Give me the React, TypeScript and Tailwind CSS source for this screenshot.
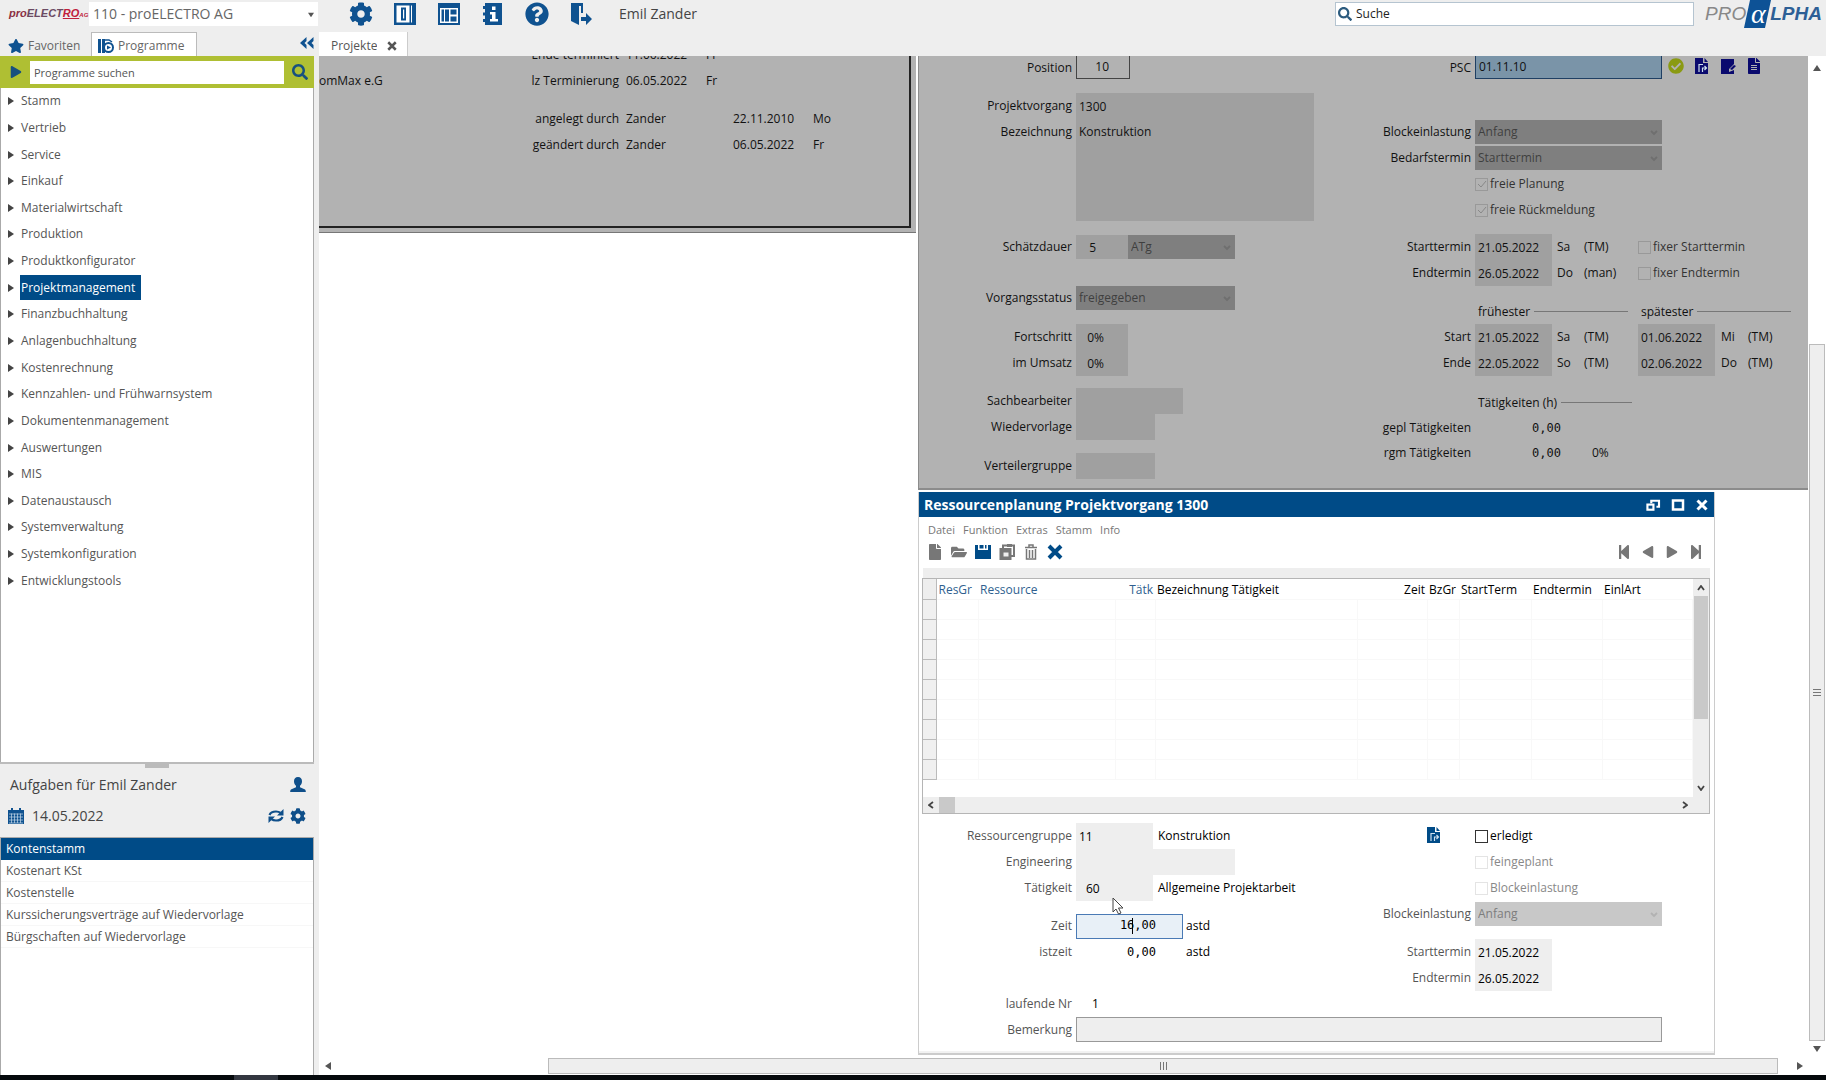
import type { ReactNode } from "react";
import clsx from "clsx";
import {
  FaCheckCircle,
  FaCog,
  FaFile,
  FaFileAlt,
  FaFolderOpen,
  FaPlay,
  FaQuestionCircle,
  FaSearch,
  FaStar,
  FaStepBackward,
  FaStepForward,
} from "react-icons/fa";

const programme = [
  "Stamm",
  "Vertrieb",
  "Service",
  "Einkauf",
  "Materialwirtschaft",
  "Produktion",
  "Produktkonfigurator",
  "Projektmanagement",
  "Finanzbuchhaltung",
  "Anlagenbuchhaltung",
  "Kostenrechnung",
  "Kennzahlen- und Frühwarnsystem",
  "Dokumentenmanagement",
  "Auswertungen",
  "MIS",
  "Datenaustausch",
  "Systemverwaltung",
  "Systemkonfiguration",
  "Entwicklungstools",
];

const aufgaben = [
  "Kontenstamm",
  "Kostenart KSt",
  "Kostenstelle",
  "Kurssicherungsverträge auf Wiedervorlage",
  "Bürgschaften auf Wiedervorlage",
];

const spalten = [
  { name: "ResGr", cell: "w-[42px]", head: "text-[#2f5f8f]" },
  { name: "Ressource", cell: "w-[137px]", head: "text-[#2f5f8f]" },
  { name: "Tätk", cell: "w-[40px]", head: "text-right text-[#2f5f8f]" },
  { name: "Bezeichnung Tätigkeit", cell: "w-[202px]", head: "text-black" },
  { name: "Zeit", cell: "w-[70px]", head: "text-right text-black" },
  { name: "BzGr", cell: "w-[32px]", head: "text-black" },
  { name: "StartTerm", cell: "w-[72px]", head: "text-black" },
  { name: "Endtermin", cell: "w-[71px]", head: "text-black" },
  { name: "EinlArt", cell: "", head: "text-black" },
];

/* ---------- icons ---------- */

function ColumnsIcon() {
  return (
    <svg viewBox="0 0 24 24" className="size-6">
      <path d="M1 1h22v22H1z" fill="currentColor" />
      <path d="M3.500 3.500h13v17h-13zM18 3.500h1v17h-1z" fill="#fff" />
      <path d="M8 5.500h5v13H8z" fill="currentColor" />
      <path d="M10 7.500h1.200v9H10z" fill="#fff" />
    </svg>
  );
}

function LayoutIcon() {
  return (
    <svg viewBox="0 0 24 24" className="size-6">
      <path d="M1 1h22v22H1z" fill="currentColor" />
      <path d="M3 6h18v15H3z" fill="#fff" />
      <path d="M4.500 7.500h2.500v12H4.500zM8 7.500h4v12H8zM13.500 7.500h6v5h-6zM13.500 14.500h6v5h-6z" fill="currentColor" />
    </svg>
  );
}

function InfoBookIcon() {
  return (
    <svg viewBox="0 0 24 24" className="size-6">
      <path d="M4 1h17v22H4v-3H2v-3h2v-3.500H2v-3h2V7H2V4h2z" fill="currentColor" />
      <path d="M11 4.500h3.500v3.500H11zM9 10h5.500v7H17v2.500H9V17h2v-4.500H9z" fill="#fff" />
    </svg>
  );
}

function ExitIcon() {
  return (
    <svg viewBox="0 0 24 24" className="size-6">
      <path d="M2 1h12v10h-2V4h-2v19l-8-4z" fill="currentColor" />
      <path d="M12 15v4h5v4l6-6-6-6v4z" fill="currentColor" />
    </svg>
  );
}

function ProgramsIcon() {
  return (
    <svg viewBox="0 0 16 16" className="size-4">
      <path d="M0 1h3v14H0zM4 1h3v14H4z" fill="currentColor" />
      <circle cx="10.500" cy="9.500" r="4.500" fill="#fff" stroke="currentColor" strokeWidth="2" />
      <path d="M9 7.500l4 2-4 2z" fill="currentColor" />
      <path d="M7 2h4l3 2" fill="none" stroke="currentColor" strokeWidth="1.500" />
    </svg>
  );
}

function CollapseIcon() {
  return (
    <svg viewBox="0 0 14 12" className="h-3 w-3.5">
      <path d="M6.500 0v4L4.500 6l2 2v4L0 6zM13.500 0v4l-2 2 2 2v4L7 6z" fill="currentColor" />
    </svg>
  );
}

function CalendarIcon() {
  return (
    <svg viewBox="0 0 16 16" className="size-4">
      <path d="M0 2h3V0h2v2h6V0h2v2h3v14H0z" fill="currentColor" />
      <path
        d="M1 6h14M1 9h14M1 12h14M1 15h14M3.500 5.500V15M6.500 5.500V15M9.500 5.500V15M12.500 5.500V15"
        stroke="#c5d8ea"
        strokeWidth=".7"
      />
    </svg>
  );
}

function PersonIcon() {
  return (
    <svg viewBox="0 0 16 16" className="size-4" fill="currentColor">
      <path d="M8 0c2.600 0 4 1.800 4 4.300 0 2-.9 3.700-2 4.500v1.400l4.500 2c.9.400 1.300 1.200 1.300 2.300V15H.2v-.5c0-1.100.4-1.900 1.300-2.300l4.500-2V8.800C4.900 8 4 6.300 4 4.300 4 1.800 5.400 0 8 0z" />
    </svg>
  );
}

function RefreshIcon() {
  return (
    <svg viewBox="0 0 16 16" className="size-4" fill="none" stroke="currentColor" strokeWidth="2.200">
      <path d="M1.500 7C2.500 4.500 5 3.500 8 3.500c2 0 3.500.5 4.500 1.300M14.500 9c-1 2.500-3.500 3.500-6.500 3.500-2 0-3.500-.5-4.500-1.300" />
      <path d="M15.500 1v6.500H9zM.5 15V8.500H7z" fill="currentColor" stroke="none" />
    </svg>
  );
}

function SaveIcon() {
  return (
    <svg viewBox="0 0 16 16" className="size-4">
      <path d="M0 1h3v5h10V1h3v14H0z" fill="currentColor" />
      <path d="M4.500 1h4v3.500h-4zM10 1h1.500v3.500H10z" fill="currentColor" />
    </svg>
  );
}

function CopyIcon() {
  return (
    <svg viewBox="0 0 16 16" className="size-4" fill="none" stroke="currentColor" strokeWidth="2">
      <path d="M4 4V1.500h11V12h-3" />
      <path d="M8 1.500h5" strokeWidth="3" />
      <rect x="1.500" y="5" width="10" height="10" fill="currentColor" />
      <path d="M4.500 8.500h5v4h-5z" fill="#eee" stroke="none" />
    </svg>
  );
}

function TrashIcon() {
  return (
    <svg viewBox="0 0 16 16" className="size-4" fill="none" stroke="currentColor" strokeWidth="1.500">
      <path d="M2 3.500h12M6 3V1h4v2M3.500 5v10h9V5M6.500 6v8M9.500 6v8" />
    </svg>
  );
}

function DocJumpIcon() {
  return (
    <svg viewBox="0 0 16 16" className="size-4">
      <path d="M1 0h8v5h5v11H1zM10.500 0L14 4h-3.500z" fill="currentColor" />
      <path d="M5 14V6.500h4M8.500 14V10H12M10.500 8l2 2-2 2" fill="none" stroke="#cfe0ee" strokeWidth="1.200" />
    </svg>
  );
}

function DocEditIcon() {
  return (
    <svg viewBox="0 0 16 16" className="size-4">
      <path d="M1 1h13v5l-5 5v3l5-2v4H1z" fill="currentColor" />
      <path d="M10 11l4-4 2 1-4 4z" fill="currentColor" />
    </svg>
  );
}

function CrossIcon({ className }: { className: string }) {
  return (
    <svg viewBox="0 0 16 16" className={className} fill="none" stroke="currentColor" strokeWidth="4">
      <path d="M2 2l12 12M14 2L2 14" />
    </svg>
  );
}

function RestoreIcon() {
  return (
    <svg viewBox="0 0 16 14" className="h-3 w-4" fill="none" stroke="currentColor" strokeWidth="2.500">
      <path d="M6 5V2h9v7h-3" />
      <rect x="1.500" y="6.500" width="7" height="6" />
    </svg>
  );
}

function MaximizeIcon() {
  return (
    <svg viewBox="0 0 14 12" className="h-3 w-3.5" fill="none" stroke="currentColor" strokeWidth="2.500">
      <rect x="2" y="1.500" width="10" height="9" />
    </svg>
  );
}

function Chevron({ className, d = "M1 5l3-4 3 4" }: { className?: string; d?: string }) {
  return (
    <svg viewBox="0 0 8 6" className={clsx("h-1.5 w-2", className)} fill="none" stroke="currentColor" strokeWidth="1.800">
      <path d={d} />
    </svg>
  );
}

function Triangle({ className = "h-2 w-1.5" }: { className?: string }) {
  return (
    <svg viewBox="0 0 6 8" className={className}>
      <path d="M0 0l6 4-6 4z" fill="currentColor" />
    </svg>
  );
}

/* ---------- form parts ---------- */

function Row({
  id,
  label,
  className,
  labelClass = "w-[153px]",
  children,
}: {
  id?: string;
  label?: string;
  className?: string;
  labelClass?: string;
  children?: ReactNode;
}) {
  return (
    <div className={clsx("flex h-[26px] items-center", className)}>
      <label htmlFor={id} className={clsx("mr-1 shrink-0 text-right whitespace-nowrap", labelClass)}>
        {label}
      </label>
      {children}
    </div>
  );
}

function Field({ id, value = "", label, className }: { id: string; value?: string; label?: string; className?: string }) {
  return (
    <input
      id={id}
      aria-label={label}
      defaultValue={value}
      readOnly
      className={clsx("h-[26px] px-[3px] outline-none", className)}
    />
  );
}

function Choice({ id, value, className, dark }: { id: string; value: string; className: string; dark?: boolean }) {
  return (
    <span className={clsx("relative", className)}>
      <select
        id={id}
        disabled
        className={clsx(
          "block h-6 w-full appearance-none px-[3px] opacity-100",
          dark ? "bg-[#7f7f7f] text-[#3f3f3f]" : "bg-[#c8c8c8] text-[#7d7d7d]"
        )}
      >
        <option>{value}</option>
      </select>
      <Chevron
        d="M1 1l3 3 3-3"
        className={clsx("pointer-events-none absolute top-2.5 right-1", dark ? "text-[#6f6f6f]" : "text-[#b2b2b2]")}
      />
    </span>
  );
}

function Check({ label, box, checked, disabled, className }: { label: string; box: string; checked?: boolean; disabled?: boolean; className?: string }) {
  return (
    <label className={clsx("relative flex items-center gap-0.5 whitespace-nowrap", className)}>
      <input type="checkbox" defaultChecked={checked} disabled={disabled} className={clsx("size-[13px] appearance-none border", box)} />
      {checked && (
        <svg viewBox="0 0 12 12" className="absolute left-px size-3 text-[#888]" fill="none" stroke="currentColor">
          <path d="M2 6l3 3 5-6" />
        </svg>
      )}
      {label}
    </label>
  );
}

function GroupTitle({ text, className }: { text: string; className: string }) {
  return (
    <div className={clsx("flex items-center gap-1 pl-[3px] whitespace-nowrap", className)}>
      {text}
      <span className="h-px flex-1 bg-[#777]" />
    </div>
  );
}

const grau = "bg-[#a0a0a0]";
const hell = "bg-[#eee]";
const mono = "[font-family:'DejaVu_Sans_Mono',monospace]";

/* ---------- page parts ---------- */

function Header() {
  return (
    <header className="flex h-8 shrink-0 items-center pb-1 text-[#0f5290]">
      <div className="w-[89px] pl-[9px] text-[11px] font-bold whitespace-nowrap italic [font-family:'Liberation_Sans',sans-serif]">
        <span className="text-[#8c2f42]">pro</span>
        <span className="text-[#6b4a63]">ELECT</span>
        <span className="text-[#c0203a] underline">RO</span>
        <span className="text-[6px] text-[#c0203a]">AG</span>
      </div>
      <div className="relative w-[229px]">
        <select aria-label="Mandant" className="block h-6 w-full appearance-none bg-white px-1 text-[14px] text-[#666]">
          <option>110 - proELECTRO AG</option>
        </select>
        <Triangle className="pointer-events-none absolute top-2.5 right-1 size-1.5 rotate-90 text-[#555]" />
      </div>
      <nav className="ml-[31px] flex items-center gap-5">
        <button aria-label="Einstellungen"><FaCog className="size-6" /></button>
        <button aria-label="Spalten"><ColumnsIcon /></button>
        <button aria-label="Layout"><LayoutIcon /></button>
        <button aria-label="Info"><InfoBookIcon /></button>
        <button aria-label="Hilfe"><FaQuestionCircle className="size-6" /></button>
        <button aria-label="Abmelden"><ExitIcon /></button>
      </nav>
      <span className="ml-[26px] text-[14px] text-[#444]">Emil Zander</span>
      <div className="ml-auto flex h-6 w-[359px] items-center gap-1 border border-[#b5c4d0] bg-white px-0.5">
        <FaSearch className="size-3.5 text-[#2c5b7e]" />
        <input aria-label="Suche" placeholder="Suche" className="min-w-0 flex-1 text-[12px] outline-none placeholder:text-[#222]" />
      </div>
      <div className="flex w-[132px] items-center justify-end pr-1 text-[19px] italic [font-family:'Liberation_Sans',sans-serif]">
        <span className="text-[#888]">PRO</span>
        <span className="relative flex h-7 w-6 items-center justify-center text-white">
          <svg viewBox="0 0 28 28" className="absolute -left-0.5 h-7 w-7" preserveAspectRatio="none">
            <path d="M6 0h21l-6 28H0z" fill="#0d5296" />
          </svg>
          <span className="relative text-[28px] [font-family:'Liberation_Serif',serif]">α</span>
        </span>
        <span className="font-bold text-[#2d5f96]">LPHA</span>
      </div>
    </header>
  );
}

function Sidebar() {
  return (
    <aside className="flex w-[314px] shrink-0 flex-col">
      <div className="flex h-6 shrink-0 items-center text-[12px] text-[#666]">
        <button className="flex w-[91px] items-center gap-1 pt-1 pl-2">
          <FaStar className="size-4 text-[#0f5290]" />
          Favoriten
        </button>
        <button className="flex h-full w-[106px] items-center gap-1 border border-b-0 border-[#bbb] bg-white pt-0.5 pl-1.5">
          <span className="text-[#0f5290]"><ProgramsIcon /></span>
          Programme
        </button>
        <button aria-label="Einklappen" className="ml-auto pb-0.5 text-[#0f5290]">
          <CollapseIcon />
        </button>
      </div>
      <div className="flex h-8 shrink-0 items-center gap-2 bg-[#afbf33] pr-1.5 pl-2.5 text-[#17507f]">
        <button aria-label="Starten"><FaPlay className="size-3" /></button>
        <input
          aria-label="Programme suchen"
          placeholder="Programme suchen"
          className="h-[23px] min-w-0 flex-1 bg-white px-1 text-[11px] outline-none placeholder:text-[#555]"
        />
        <button aria-label="Suchen"><FaSearch className="size-4" /></button>
      </div>
      <div className="min-h-0 flex-1 border-x border-[#aaa] bg-white">
        <ul className="grid h-[506px] auto-rows-fr">
          {programme.map((name) => (
            <li key={name} className="flex items-center gap-1.5 pl-[7px] text-[#444]">
              <Triangle />
              <button
                className={clsx(
                  "flex h-[25px] items-center pr-1.5 pl-px whitespace-nowrap",
                  name === "Projektmanagement" ? "bg-[#004b87] text-white" : "text-[#555]"
                )}
              >
                {name}
              </button>
            </li>
          ))}
        </ul>
      </div>
      <div className="flex h-[75px] shrink-0 flex-col border-t-2 border-[#bbb] text-[14px] text-[#444]">
        <span className="h-1 w-6 self-center bg-[#bbb]" />
        <div className="flex h-8 items-center justify-between pt-0.5 pr-2 pl-2.5">
          Aufgaben für Emil Zander
          <button aria-label="Benutzer" className="text-[#0f4f8a]"><PersonIcon /></button>
        </div>
        <div className="flex h-8 items-center pr-2 pl-2">
          <span className="text-[#0f5290]"><CalendarIcon /></span>
          <span className="ml-2">14.05.2022</span>
          <button aria-label="Aktualisieren" className="ml-auto text-[#0f4f8a]"><RefreshIcon /></button>
          <button aria-label="Aufgaben einstellen" className="ml-1.5 text-[#0f4f8a]"><FaCog className="size-4" /></button>
        </div>
      </div>
      <ul className="h-[238px] shrink-0 border border-b-0 border-[#aaa] bg-white">
        {aufgaben.map((name, i) => (
          <li key={name}>
            <button
              className={clsx(
                "flex h-[22px] w-full items-center border-b pl-[5px] whitespace-nowrap",
                i === 0 ? "border-[#004b87] bg-[#004b87] text-white" : "border-[#f7f7f7] text-[#555]"
              )}
            >
              {name}
            </button>
          </li>
        ))}
      </ul>
    </aside>
  );
}

function StammPanel() {
  const zeile = "grid h-[26px] grid-cols-[300px_7px_80px_27px_80px_1fr] items-center whitespace-nowrap";
  return (
    <section className="flex h-[177px] w-[597px] shrink-0 overflow-hidden border-b border-[#777] bg-[#b2b2b2] pr-[5px]">
      <div className="h-[172px] flex-1 border-r-2 border-b-2 border-[#222]">
        <div className="-mt-[14px]">
          <div className={zeile}>
            <span className="text-right">Ende terminiert</span>
            <span />
            <span>11.06.2022</span>
            <span>Fr</span>
          </div>
          <div className={zeile}>
            <span className="flex justify-between">
              <span>omMax e.G</span>
              <span>lz Terminierung</span>
            </span>
            <span />
            <span>06.05.2022</span>
            <span>Fr</span>
          </div>
          <div className={clsx(zeile, "mt-3")}>
            <span className="text-right">angelegt durch</span>
            <span />
            <span>Zander</span>
            <span />
            <span>22.11.2010</span>
            <span>Mo</span>
          </div>
          <div className={zeile}>
            <span className="text-right">geändert durch</span>
            <span />
            <span>Zander</span>
            <span />
            <span>06.05.2022</span>
            <span>Fr</span>
          </div>
        </div>
      </div>
    </section>
  );
}

function Termin({ id, label, tag, art, children }: { id: string; label: string; tag: string[]; art: string; children?: ReactNode }) {
  return (
    <Row id={id} label={label} labelClass="w-[157px]">
      <Field id={id} value={tag[0]} className={clsx("w-[77px]", grau)} />
      <span className="ml-[5px] w-[27px]">{tag[1]}</span>
      <span className="w-[54px]">{art}</span>
      {children}
    </Row>
  );
}

function VorgangPanel() {
  const box = "border-[#999] bg-[#b2b2b2]";
  return (
    <section className="flex h-[434px] shrink-0 border-b-2 border-l border-[#8c8c8c] bg-[#b2b2b2]">
      <div className="w-[395px] shrink-0">
        <Row id="position" label="Position" className="h-6!">
          <Field id="position" value="10" className="mb-0.5 h-6! w-[54px] border border-t-0 border-[#444] pr-5! text-right" />
        </Row>
        <Row id="vorgang" label="Projektvorgang" className="mt-[13px]">
          <Field id="vorgang" value="1300" className={clsx("w-[238px]", grau)} />
        </Row>
        <div className="flex">
          <label htmlFor="bezeichnung" className="mr-1 w-[153px] pt-[5px] text-right">Bezeichnung</label>
          <textarea
            id="bezeichnung"
            readOnly
            defaultValue="Konstruktion"
            className={clsx("h-[102px] w-[238px] resize-none px-[3px] pt-[5px] outline-none", grau)}
          />
        </div>
        <Row id="dauer" label="Schätzdauer" className="mt-[13px]">
          <Field id="dauer" value="5" className={clsx("h-6! w-[52px] pr-8! text-right", grau)} />
          <Choice id="einheit" value="ATg" dark className="w-[107px]" />
        </Row>
        <Row id="status" label="Vorgangsstatus" className="mt-[25px]">
          <Choice id="status" value="freigegeben" dark className="w-[159px]" />
        </Row>
        <Row id="fortschritt" label="Fortschritt" className="mt-[13px]">
          <Field id="fortschritt" value="0%" className={clsx("w-[52px] pr-6! text-right", grau)} />
        </Row>
        <Row id="umsatz" label="im Umsatz">
          <Field id="umsatz" value="0%" className={clsx("w-[52px] pr-6! text-right", grau)} />
        </Row>
        <Row id="bearbeiter" label="Sachbearbeiter" className="mt-3">
          <Field id="bearbeiter" className={clsx("w-[107px]", grau)} />
        </Row>
        <Row id="wiedervorlage" label="Wiedervorlage">
          <Field id="wiedervorlage" className={clsx("w-[79px]", grau)} />
        </Row>
        <Row id="verteiler" label="Verteilergruppe" className="mt-[13px]">
          <Field id="verteiler" className={clsx("w-[79px]", grau)} />
        </Row>
      </div>

      <div>
        <Row id="psc" label="PSC" labelClass="w-[157px]" className="h-6!">
          <Field id="psc" value="01.11.10" className="mb-0.5 h-6! w-[187px] border border-t-0 border-[#1f3f63] bg-[#7a94a8]" />
          <div className="ml-1.5 flex items-center gap-[10px] pb-1 text-[#0a0a6e]">
            <FaCheckCircle className="size-4 text-[#8a9a12]" />
            <DocJumpIcon />
            <DocEditIcon />
            <FaFileAlt className="size-4" />
          </div>
        </Row>
        <Row id="block" label="Blockeinlastung" labelClass="w-[157px]" className="mt-[39px]">
          <Choice id="block" value="Anfang" dark className="w-[187px]" />
        </Row>
        <Row id="bedarf" label="Bedarfstermin" labelClass="w-[157px]">
          <Choice id="bedarf" value="Starttermin" dark className="w-[187px]" />
        </Row>
        <Row labelClass="w-[157px]">
          <Check label="freie Planung" checked disabled box={box} className="text-[#333]" />
        </Row>
        <Row labelClass="w-[157px]">
          <Check label="freie Rückmeldung" checked disabled box={box} className="text-[#333]" />
        </Row>
        <div className="h-[11px]" />
        <Termin id="start" label="Starttermin" tag={["21.05.2022", "Sa"]} art="(TM)">
          <Check label="fixer Starttermin" disabled box={box} className="text-[#333]" />
        </Termin>
        <Termin id="end" label="Endtermin" tag={["26.05.2022", "Do"]} art="(man)">
          <Check label="fixer Endtermin" disabled box={box} className="text-[#333]" />
        </Termin>
        <div className="mt-[13px] flex h-[25px] items-center pl-[161px]">
          <GroupTitle text="frühester" className="mr-[10px] w-[153px]" />
          <GroupTitle text="spätester" className="w-[153px]" />
        </div>
        <Termin id="fstart" label="Start" tag={["21.05.2022", "Sa"]} art="(TM)">
          <Field id="sstart" label="Start spätester" value="01.06.2022" className={clsx("w-[77px]", grau)} />
          <span className="ml-1.5 w-[27px]">Mi</span>
          (TM)
        </Termin>
        <Termin id="fende" label="Ende" tag={["22.05.2022", "So"]} art="(TM)">
          <Field id="sende" label="Ende spätester" value="02.06.2022" className={clsx("w-[77px]", grau)} />
          <span className="ml-1.5 w-[27px]">Do</span>
          (TM)
        </Termin>
        <div className="mt-[14px] flex h-[25px] items-center pl-[161px]">
          <GroupTitle text="Tätigkeiten (h)" className="w-[157px]" />
        </div>
        <Row id="gepl" label="gepl Tätigkeiten" labelClass="w-[157px]" className="h-[25px]!">
          <output id="gepl" className={clsx("w-[86px] text-right", mono)}>0,00</output>
        </Row>
        <Row id="rgm" label="rgm Tätigkeiten" labelClass="w-[157px]" className="h-[25px]!">
          <output id="rgm" className={clsx("w-[86px] text-right", mono)}>0,00</output>
          <span className="ml-[31px]">0%</span>
        </Row>
      </div>
    </section>
  );
}

function RessourcenTabelle() {
  return (
    <div className="mr-1 ml-[3px] border border-[#b5b5b5]">
      <div className="flex h-[218px]">
        <table className="h-[200px] min-w-0 flex-1 table-fixed border-collapse text-left">
          <thead>
            <tr className="h-5">
              <th aria-label="Zeile" className="w-[13px] border-r border-b border-[#bbb] bg-[#eee]" />
              {spalten.map((s) => (
                <th key={s.name} className={clsx("px-0.5 pt-0.5 font-normal whitespace-nowrap", s.cell, s.head)}>
                  {s.name}
                </th>
              ))}
            </tr>
          </thead>
          <tbody>
            {Array.from({ length: 9 }, (_, i) => (
              <tr key={i} className="h-5">
                <td className="border-r border-b border-[#bbb] bg-[#f0f0f0]" />
                {spalten.map((s) => (
                  <td key={s.name} className="border border-[#f8f8f8]" />
                ))}
              </tr>
            ))}
          </tbody>
        </table>
        <div className="flex w-4 flex-col items-center bg-[#eee] text-[#444]">
          <span className="flex h-[17px] items-center"><Chevron /></span>
          <span className="h-[123px] w-[14px] bg-[#c9c9c9]" />
          <Chevron d="M1 1l3 4 3-4" className="mt-auto mb-1.5" />
        </div>
      </div>
      <div className="flex h-4 items-center bg-[#eee] pr-5 pl-1 text-[#444]">
        <Chevron className="-rotate-90" />
        <span className="ml-1 h-full w-4 bg-[#c9c9c9]" />
        <Chevron className="ml-auto rotate-90" />
      </div>
    </div>
  );
}

function RessourcenFenster() {
  const blass = "border-[#e4e4e4] bg-white";
  return (
    <section className="mt-0.5 flex w-[797px] flex-col border-x border-b-2 border-[#ccc] bg-white text-[#555]">
      <div className="flex h-[25px] items-center bg-[#004b87] px-[5px] text-white">
        <h2 className="flex-1 text-[14px] font-bold">Ressourcenplanung Projektvorgang 1300</h2>
        <div className="flex items-center gap-2.5">
          <button aria-label="Wiederherstellen"><RestoreIcon /></button>
          <button aria-label="Maximieren"><MaximizeIcon /></button>
          <button aria-label="Schließen"><CrossIcon className="size-3.5 p-px" /></button>
        </div>
      </div>
      <div className="flex h-[25px] items-center gap-2 pl-[9px] text-[11px] text-[#777]">
        <button>Datei</button>
        <button>Funktion</button>
        <button>Extras</button>
        <button>Stamm</button>
        <button>Info</button>
      </div>
      <div className="flex h-[26px] items-start gap-2 pt-0.5 pr-2.5 pl-2 text-[#777]">
        <button aria-label="Neu"><FaFile className="size-4" /></button>
        <button aria-label="Öffnen"><FaFolderOpen className="size-4" /></button>
        <button aria-label="Speichern" className="text-[#004b87]"><SaveIcon /></button>
        <button aria-label="Kopieren"><CopyIcon /></button>
        <button aria-label="Löschen"><TrashIcon /></button>
        <button aria-label="Abbrechen" className="text-[#004b87]"><CrossIcon className="size-4" /></button>
        <span className="flex-1" />
        <button aria-label="Erster"><FaStepBackward className="size-4" /></button>
        <button aria-label="Voriger"><FaPlay className="size-4 rotate-180 p-0.5" /></button>
        <button aria-label="Nächster"><FaPlay className="size-4 p-0.5" /></button>
        <button aria-label="Letzter"><FaStepForward className="size-4" /></button>
      </div>
      <div className="mx-1 h-2.5 bg-[#eee]" />
      <RessourcenTabelle />

      <div className="mt-[9px] flex">
        <div className="w-[395px] shrink-0">
          <Row id="gruppe" label="Ressourcengruppe">
            <Field id="gruppe" value="11" className={clsx("w-[77px] text-black", hell)} />
            <span className="ml-[5px] text-black">Konstruktion</span>
          </Row>
          <Row id="engineering" label="Engineering">
            <Field id="engineering" className={clsx("w-[159px]", hell)} />
          </Row>
          <Row id="taetigkeit" label="Tätigkeit">
            <Field id="taetigkeit" value="60" className={clsx("w-[77px] pl-2.5! text-black", hell)} />
            <span className="ml-[5px] whitespace-nowrap text-black">Allgemeine Projektarbeit</span>
          </Row>
          <Row id="zeit" label="Zeit" className="relative mt-[12px]">
            <input
              id="zeit"
              defaultValue="16,00"
              className={clsx(
                "h-[25px] w-[107px] border border-[#4a7ab5] bg-[#e8f0f7] pr-[26px] pb-0.5 text-right text-black outline-none",
                mono
              )}
            />
            <span className="absolute left-[213px] h-4 w-px bg-black" />
            <svg viewBox="0 0 12 18" className="absolute -top-4 left-[193px] h-[18px] w-3">
              <path d="M1 1v14l3-3 2.500 5 2.500-1-2.500-5H11z" fill="#fff" stroke="#444" />
            </svg>
            <span className="ml-[3px] text-black">astd</span>
          </Row>
          <Row id="istzeit" label="istzeit">
            <output id="istzeit" className={clsx("w-[107px] pr-[27px] text-right text-black", mono)}>0,00</output>
            <span className="ml-[3px] text-black">astd</span>
          </Row>
          <Row id="nr" label="laufende Nr" className="mt-[26px]">
            <output id="nr" className="pl-4 text-black">1</output>
          </Row>
        </div>
        <div className="relative">
          <Row labelClass="w-[157px]">
            <Check label="erledigt" box="border-[#333] bg-white" className="text-black" />
          </Row>
          <button aria-label="Beleg öffnen" className="absolute top-1 left-[112px] text-[#004b87]"><DocJumpIcon /></button>
          <Row labelClass="w-[157px]">
            <Check label="feingeplant" disabled box={blass} className="text-[#888]" />
          </Row>
          <Row labelClass="w-[157px]">
            <Check label="Blockeinlastung" disabled box={blass} className="text-[#888]" />
          </Row>
          <Row id="rblock" label="Blockeinlastung" labelClass="w-[157px]" className="h-[25px]!">
            <Choice id="rblock" value="Anfang" className="w-[187px]" />
          </Row>
          <Row id="rstart" label="Starttermin" labelClass="w-[157px]" className="mt-[13px]">
            <Field id="rstart" value="21.05.2022" className={clsx("w-[77px] text-black", hell)} />
          </Row>
          <Row id="rend" label="Endtermin" labelClass="w-[157px]">
            <Field id="rend" value="26.05.2022" className={clsx("w-[77px] text-black", hell)} />
          </Row>
        </div>
      </div>
      <Row id="bemerkung" label="Bemerkung" className="h-[25px]!">
        <Field id="bemerkung" className="h-[25px]! w-[586px] border border-[#999] bg-[#eee]" />
      </Row>
      <div className="mt-[9px] h-0.5 bg-[#f2f2f2]" />
    </section>
  );
}

function Arbeitsbereich() {
  return (
    <main className="flex min-w-0 flex-1 flex-col">
      <div className="flex h-6 shrink-0 items-center text-[12px] text-[#555]">
        <button className="h-full bg-white pt-1 pl-3">Projekte</button>
        <button aria-label="Tab schließen" className="h-full border-r border-[#ccc] bg-white px-2.5 pt-1">
          <CrossIcon className="size-2.5" />
        </button>
      </div>
      <div className="flex min-h-0 flex-1 bg-white">
        <div className="flex min-w-0 flex-1 items-start gap-0.5 overflow-hidden">
          <StammPanel />
          <div className="min-w-0 flex-1">
            <VorgangPanel />
            <RessourcenFenster />
          </div>
        </div>
        <div className="flex w-[18px] shrink-0 flex-col items-center text-[#555]">
          <Triangle className="mt-2 h-2 w-1.5 -rotate-90" />
          <div className="mt-[272px] flex w-4 flex-1 flex-col items-center justify-center gap-0.5 border border-[#bbb] bg-[#eee]">
            <span className="h-px w-2 bg-[#777]" />
            <span className="h-px w-2 bg-[#777]" />
            <span className="h-px w-2 bg-[#777]" />
          </div>
          <Triangle className="my-1 h-2 w-1.5 rotate-90" />
        </div>
      </div>
      <div className="flex h-[18px] shrink-0 items-center bg-white pr-[23px] pl-1.5 text-[#555]">
        <Triangle className="h-2 w-1.5 rotate-180" />
        <div className="mr-[19px] ml-[217px] flex h-4 flex-1 items-center justify-center gap-0.5 border border-[#bbb] bg-[#eee]">
          <span className="h-2 w-px bg-[#777]" />
          <span className="h-2 w-px bg-[#777]" />
          <span className="h-2 w-px bg-[#777]" />
        </div>
        <Triangle />
      </div>
    </main>
  );
}

export default function App() {
  return (
    <div className="flex h-screen flex-col overflow-hidden bg-[#eee] text-[12px] leading-4 text-[#111] [font-family:'Open_Sans',sans-serif]">
      <Header />
      <div className="flex min-h-0 flex-1 gap-[5px]">
        <Sidebar />
        <Arbeitsbereich />
      </div>
      <footer className="h-[5px] shrink-0 bg-[#05090c]">
        <div className="ml-[234px] h-full w-11 bg-[#333740]" />
      </footer>
    </div>
  );
}
